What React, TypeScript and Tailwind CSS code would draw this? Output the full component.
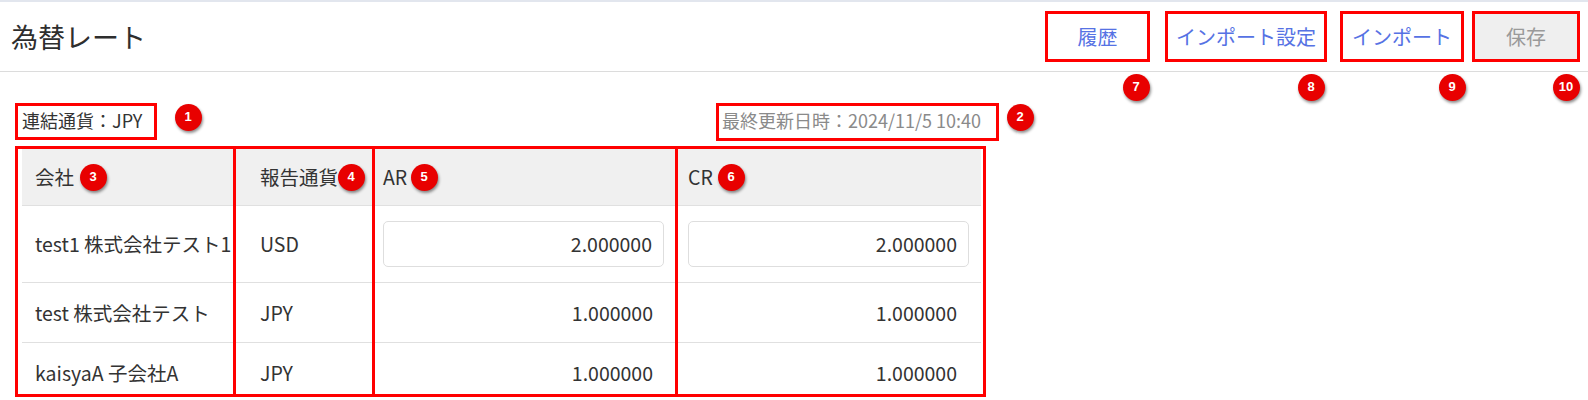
import React from "react";

const FONT = { fontFamily: '"Noto Sans CJK JP", "Noto Sans", sans-serif' };

function Badge({ n, x, y }: { n: string; x: number; y: number }) {
  return (
    <div
      className="absolute w-[27px] h-[27px] rounded-full bg-[#e80000] text-white text-[13px] font-bold flex items-center justify-center shadow-[1px_2px_3px_rgba(0,0,0,0.45)]"
      style={{ left: x - 13.5, top: y - 13.5, fontFamily: '"Liberation Sans", Arial, sans-serif' }}
    >
      {n}
    </div>
  );
}

function Box({ l, t, w, h }: { l: number; t: number; w: number; h: number }) {
  return (
    <div
      className="absolute border-[3px] border-[#ff0000] pointer-events-none"
      style={{ left: l, top: t, width: w, height: h }}
    />
  );
}

const rows = [
  { name: "test1 株式会社テスト1", cur: "USD", ar: "2.000000", cr: "2.000000", edit: true },
  { name: "test 株式会社テスト", cur: "JPY", ar: "1.000000", cr: "1.000000", edit: false },
  { name: "kaisyaA 子会社A", cur: "JPY", ar: "1.000000", cr: "1.000000", edit: false },
];

export default function App() {
  return (
    <div className="relative w-[1588px] h-[400px] overflow-hidden bg-white border-t-2 border-[#e2e6ee] text-[#333]" style={FONT}>
      {/* Header */}
      <div className="h-[70px] flex items-center justify-between pl-[11px] pr-[8px] border-b border-[#dcdcdc]">
        <h1 className="text-[27px] leading-none text-[#2e2e2e] font-normal">為替レート</h1>
        <div className="flex items-center">
          <div className="w-[105px] h-[51px] border-[3px] border-[#ff0000]">
            <button className="w-full h-full bg-white text-[#5672e4] text-[20px]">履歴</button>
          </div>
          <div className="ml-[15px] w-[162px] h-[51px] border-[3px] border-[#ff0000]">
            <button className="w-full h-full bg-white text-[#5672e4] text-[20px] whitespace-nowrap">インポート設定</button>
          </div>
          <div className="ml-[13px] w-[124px] h-[51px] border-[3px] border-[#ff0000]">
            <button className="w-full h-full bg-white text-[#5672e4] text-[20px] whitespace-nowrap">インポート</button>
          </div>
          <div className="ml-[8px] w-[108px] h-[51px] border-[3px] border-[#ff0000]">
            <button className="w-full h-full bg-[#efefef] text-[#9a9a9a] text-[20px]">保存</button>
          </div>
        </div>
      </div>

      {/* Content */}
      <div className="pl-[22px] w-[981px]">
        <div className="mt-[35px] h-[26px] flex items-center justify-between text-[18px] leading-none">
          <span className="text-[#333]">連結通貨：JPY</span>
          <span className="text-[#8a8a8a]">最終更新日時：2024/11/5 10:40</span>
        </div>

        <div className="mt-[16px] w-[959px] text-[19.5px]">
          <div className="grid grid-cols-[226px_124px_304px_305px] h-[57px] bg-[#f0f0f0] border-b border-[#e0e0e0] items-center">
            <div className="px-[13px]">会社</div>
            <div className="px-[12px] whitespace-nowrap">報告通貨</div>
            <div className="px-[11px]">AR</div>
            <div className="px-[12px]">CR</div>
          </div>
          {rows.map((r, i) => (
            <div
              key={i}
              className={
                "grid grid-cols-[226px_124px_304px_305px] border-b border-[#e0e0e0] items-center " +
                (r.edit ? "h-[77px]" : "h-[60px]")
              }
            >
              <div className="pl-[13px] whitespace-nowrap">{r.name}</div>
              <div className="px-[12px]">{r.cur}</div>
              <div className="pl-[11px] pr-[12px]">
                {r.edit ? (
                  <div className="h-[46px] w-[281px] border border-[#dedede] rounded-[5px] flex items-center justify-end pr-[11px]">
                    {r.ar}
                  </div>
                ) : (
                  <div className="text-right pr-[11px]">{r.ar}</div>
                )}
              </div>
              <div className="pl-[12px] pr-[12px]">
                {r.edit ? (
                  <div className="h-[46px] w-[281px] border border-[#dedede] rounded-[5px] flex items-center justify-end pr-[11px]">
                    {r.cr}
                  </div>
                ) : (
                  <div className="text-right pr-[12px]">{r.cr}</div>
                )}
              </div>
            </div>
          ))}
        </div>
      </div>

      {/* Annotation boxes */}
      <Box l={15} t={101} w={142} h={37} />
      <Box l={716} t={101} w={283} h={38} />
      <Box l={15} t={144} w={221} h={251} />
      <Box l={233} t={144} w={142} h={251} />
      <Box l={372} t={144} w={306} h={251} />
      <Box l={675} t={144} w={311} h={251} />

      {/* Badges */}
      <Badge n="1" x={188} y={115} />
      <Badge n="2" x={1020} y={115} />
      <Badge n="3" x={93} y={175} />
      <Badge n="4" x={351} y={175} />
      <Badge n="5" x={424} y={175} />
      <Badge n="6" x={731} y={175} />
      <Badge n="7" x={1136} y={85} />
      <Badge n="8" x={1311} y={85} />
      <Badge n="9" x={1452} y={85} />
      <Badge n="10" x={1566} y={85} />
    </div>
  );
}
